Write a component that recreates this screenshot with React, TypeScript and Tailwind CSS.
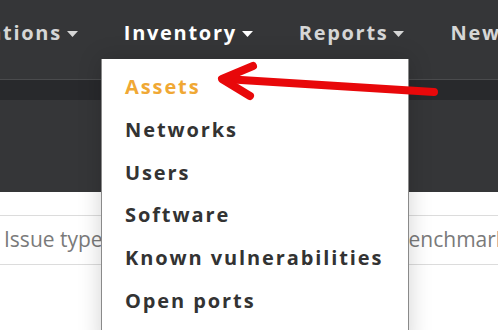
import React from 'react';

const navItems = [
  { label: 'Operations', active: false },
  { label: 'Inventory', active: true },
  { label: 'Reports', active: false },
  { label: 'News', active: false },
];

const menuItems = ['Assets', 'Networks', 'Users', 'Software', 'Known vulnerabilities', 'Open ports'];

function Caret() {
  return (
    <svg width="11" height="6" viewBox="0 0 11 6" className="ml-[5px] mt-[2px]">
      <path d="M0 0 L11 0 L5.5 6 Z" fill="currentColor" />
    </svg>
  );
}

export default function App() {
  return (
    <div
      className="relative h-[330px] w-[498px] overflow-hidden bg-white"
      style={{ fontFamily: '"Open Sans", sans-serif' }}
    >
      <header className="h-[80px] border-b border-[#4a4b4d] bg-[#353638]">
        <nav className="ml-[-90px] flex h-[66px] items-center whitespace-nowrap">
          {navItems.map((n) => (
            <div
              key={n.label}
              className={`flex items-center px-[23px] text-[20px] font-bold tracking-[1.7px] ${
                n.active ? 'text-white' : 'text-[#d6d6d6]'
              }`}
            >
              {n.label}
              <Caret />
            </div>
          ))}
        </nav>
      </header>
      <div className="h-[20px] bg-[#28292c]" />
      <div className="h-[92px] bg-[#353638]" />
      <div className="mt-[23px] flex h-[50px] items-center whitespace-nowrap border-y border-[#dcdcdc] text-[21px] text-[#7a7a7a]">
        <span className="ml-[4px] w-[391px] shrink-0">Issue type</span>
        <span>Benchmark</span>
      </div>

      <div className="absolute left-[101px] top-[59px] h-[290px] w-[308px] border-x border-[#8a8a8a] bg-white shadow-[0_0_22px_rgba(0,0,0,0.18)]">
        <ul className="pt-[14px]">
          {menuItems.map((m, i) => (
            <li
              key={m}
              className={`h-[42.8px] pl-[23px] text-[20px] font-bold leading-[28px] tracking-[1.9px] ${
                i === 0 ? 'text-[#f0a834]' : 'text-[#333333]'
              }`}
            >
              {m}
            </li>
          ))}
        </ul>
      </div>

      <svg className="absolute left-0 top-0" width="498" height="330" viewBox="0 0 498 330">
        <g stroke="#e8080a" strokeWidth="8" strokeLinecap="round" strokeLinejoin="round" fill="none">
          <path d="M434 92 L225 79" />
          <path d="M253 66 L222 79 L250 96" />
        </g>
      </svg>
    </div>
  );
}
